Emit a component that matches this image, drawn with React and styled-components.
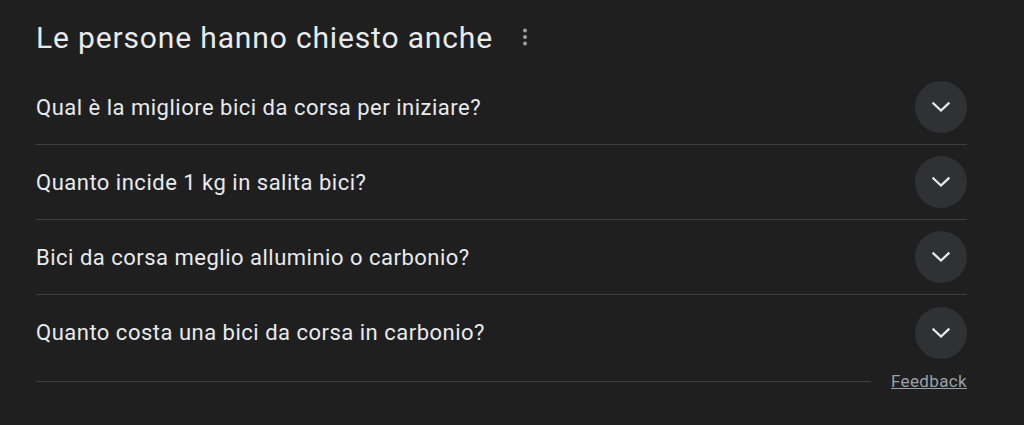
import React from 'react'
import styled, { createGlobalStyle } from 'styled-components'

const Global = createGlobalStyle`
  html, body {
    margin: 0;
    padding: 0;
    background: #1f1f1f;
  }
  body {
    font-family: Roboto, "Liberation Sans", Arial, sans-serif;
  }
`;

const Page = styled.div`
  width: 1024px;
  height: 425px;
  background: #1f1f1f;
  padding: 0 57px 0 36px;
  box-sizing: border-box;
`;

const Header = styled.div`
  display: flex;
  align-items: center;
  height: 62px;
  padding-top: 6px;
  padding-bottom: 2px;
  gap: 24px;
`;

const Title = styled.h2`
  margin: 0;
  font-weight: 400;
  font-size: 30px;
  letter-spacing: 0.85px;
  color: #e8eaed;
`;

const Kebab = styled.button`
  display: flex;
  align-items: center;
  justify-content: center;
  width: 16px;
  height: 24px;
  padding: 0;
  border: none;
  background: none;
  color: #9aa0a6;
  cursor: pointer;
`;

const List = styled.div`
  display: flex;
  flex-direction: column;
`;

const Row = styled.div`
  display: flex;
  align-items: center;
  justify-content: space-between;
  height: 75px;
  border-bottom: ${p => (p.last ? 'none' : '1px solid #3c4043')};
  box-sizing: border-box;
`;

const Question = styled.span`
  font-size: 22px;
  letter-spacing: 0.5px;
  color: #e8eaed;
`;

const Toggle = styled.div`
  width: 52px;
  height: 52px;
  border-radius: 50%;
  background: #303134;
  display: flex;
  align-items: center;
  justify-content: center;
  color: #e8eaed;
`;

const Footer = styled.div`
  display: flex;
  align-items: center;
  height: 22px;
  gap: 20px;
`;

const Rule = styled.div`
  flex: 1;
  height: 1px;
  background: #3c4043;
`;

const FeedbackLink = styled.a`
  font-size: 17px;
  letter-spacing: 0.35px;
  color: #9aa0a6;
  text-decoration: underline;
  cursor: pointer;
`;

const questions = [
  'Qual è la migliore bici da corsa per iniziare?',
  'Quanto incide 1 kg in salita bici?',
  'Bici da corsa meglio alluminio o carbonio?',
  'Quanto costa una bici da corsa in carbonio?',
];

const Chevron = () => (
  <svg width="20" height="12" viewBox="0 0 20 12" fill="none" stroke="currentColor"
    strokeWidth="2.3" strokeLinecap="square">
    <path d="M2.5 2.5 10 9.5l7.5-7" />
  </svg>
);

const Dots = () => (
  <svg width="16" height="20" viewBox="0 0 16 20" fill="currentColor">
    <circle cx="8" cy="3.5" r="2" />
    <circle cx="8" cy="10" r="2" />
    <circle cx="8" cy="16.5" r="2" />
  </svg>
);

export default function App() {
  return (
    <>
      <Global />
      <Page>
        <Header>
          <Title>Le persone hanno chiesto anche</Title>
          <Kebab aria-label="Altre opzioni"><Dots /></Kebab>
        </Header>
        <List>
          {questions.map((q, i) => (
            <Row key={q} last={i === questions.length - 1}>
              <Question>{q}</Question>
              <Toggle><Chevron /></Toggle>
            </Row>
          ))}
        </List>
        <Footer>
          <Rule />
          <FeedbackLink>Feedback</FeedbackLink>
        </Footer>
      </Page>
    </>
  )
}
